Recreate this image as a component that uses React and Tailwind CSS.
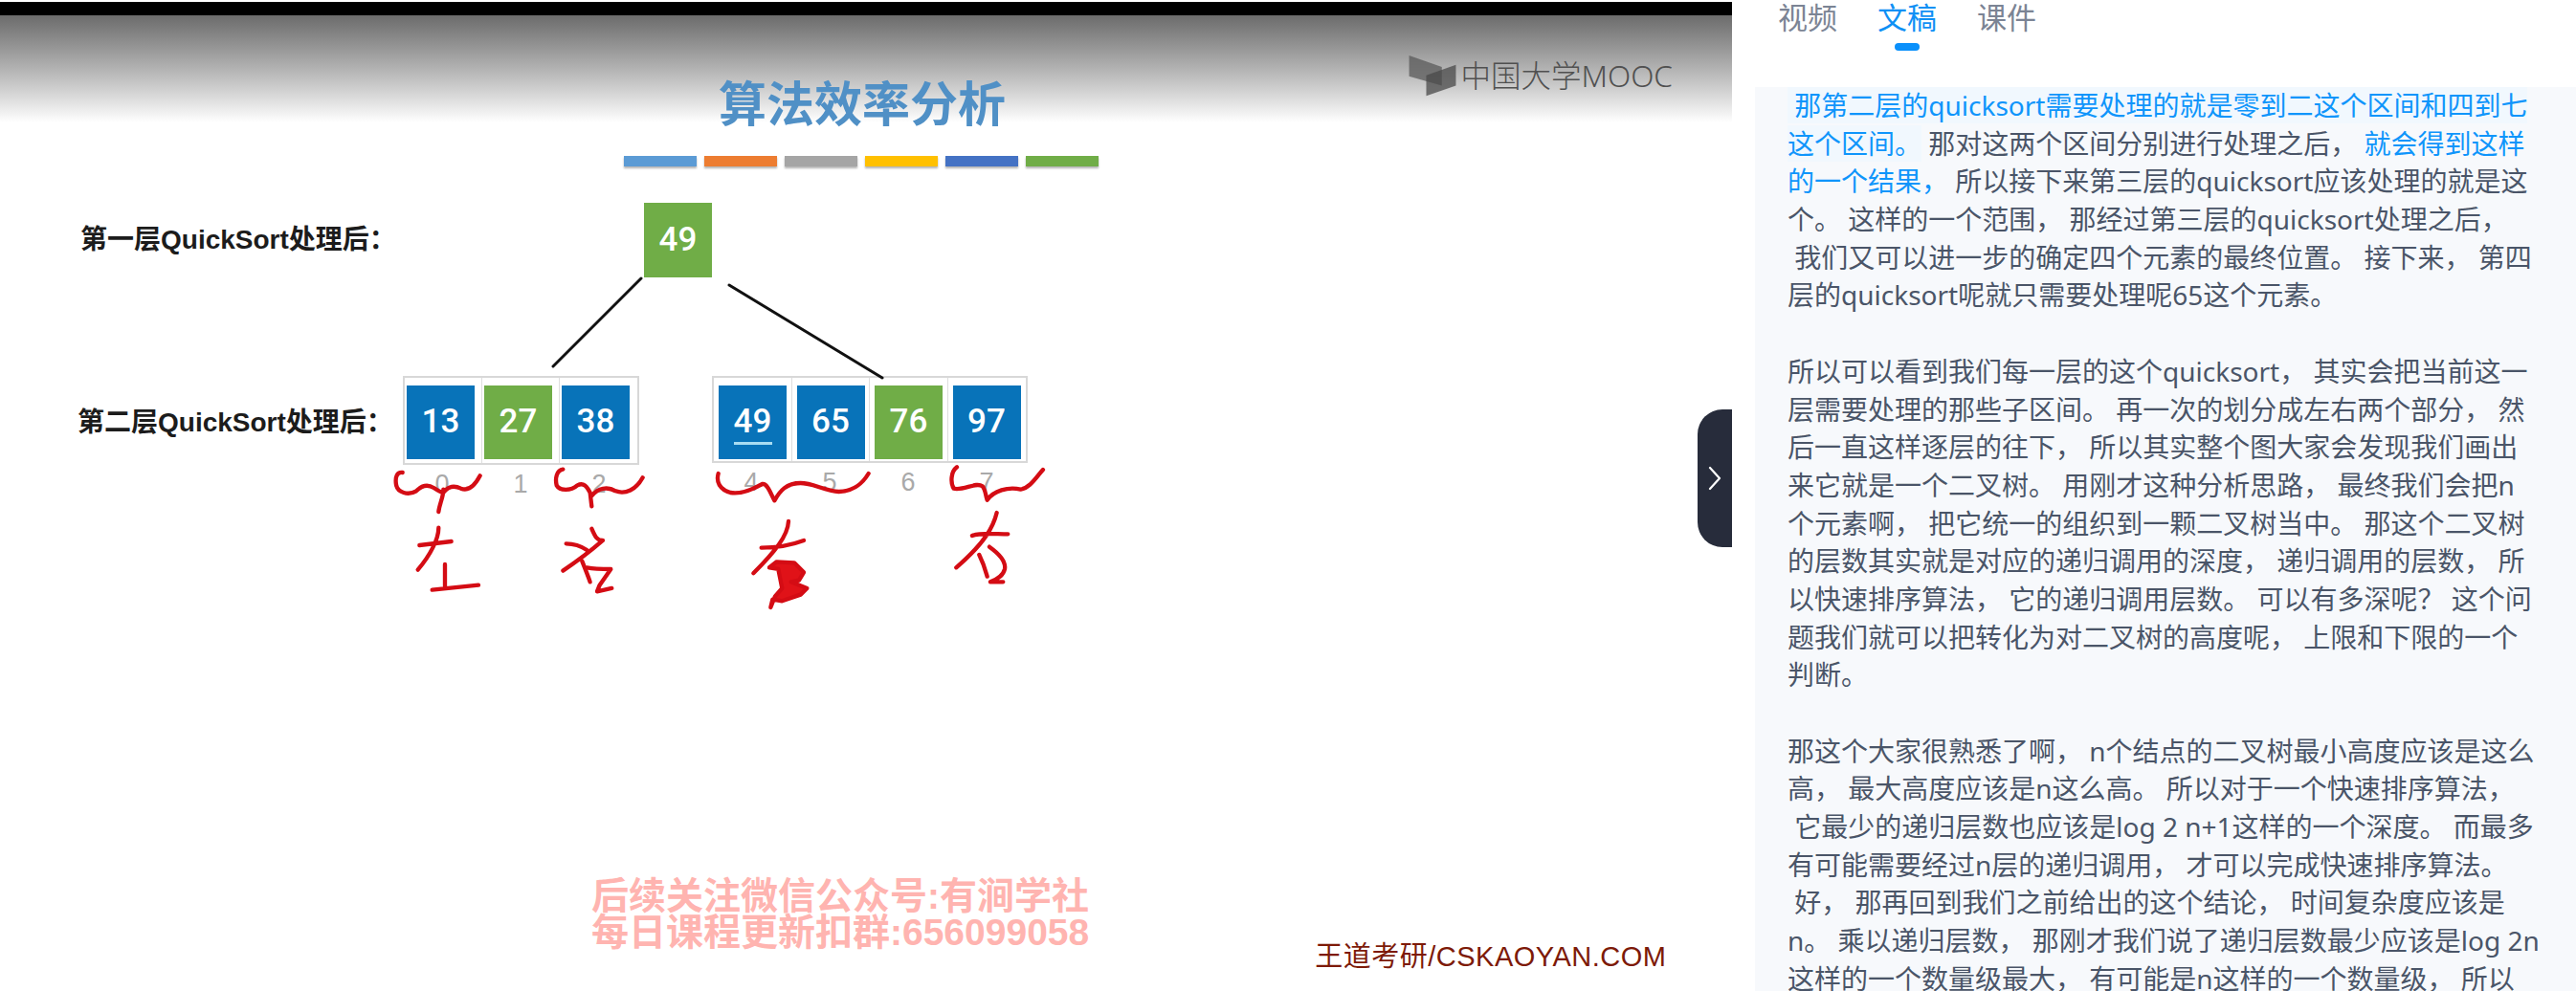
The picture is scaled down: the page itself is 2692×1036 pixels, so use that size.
const blueCells = "bg-[#0873b9]"
const greenCells = "bg-[#70ad47]"

const firstTable = [
  { n: 13, i: 0, c: blueCells },
  { n: 27, i: 1, c: greenCells },
  { n: 38, i: 2, c: blueCells },
]
const secondTable = [
  { n: 49, i: 4, c: blueCells, mark: true },
  { n: 65, i: 5, c: blueCells },
  { n: 76, i: 6, c: greenCells },
  { n: 97, i: 7, c: blueCells },
]
const bars = ["bg-[#5b9bd5]", "bg-[#ed7d31]", "bg-[#a5a5a5]", "bg-[#ffc000]", "bg-[#4472c4]", "bg-[#70ad47]"]

// b = blue text, h = blue text with the pale highlight
const lines = [
  [["h", " 那第二层的quicksort需要处理的就是零到二这个区间和四到七"]],
  [["h", "这个区间。"], ["", " 那对这两个区间分别进行处理之后， "], ["b", "就会得到这样"]],
  [["b", "的一个结果， "], ["", "所以接下来第三层的quicksort应该处理的就是这"]],
  [["", "个。 这样的一个范围， 那经过第三层的quicksort处理之后，"]],
  [["", " 我们又可以进一步的确定四个元素的最终位置。 接下来， 第四"]],
  [["", "层的quicksort呢就只需要处理呢65这个元素。"]],
  [],
  [["", "所以可以看到我们每一层的这个quicksort， 其实会把当前这一"]],
  [["", "层需要处理的那些子区间。 再一次的划分成左右两个部分， 然"]],
  [["", "后一直这样逐层的往下， 所以其实整个图大家会发现我们画出"]],
  [["", "来它就是一个二叉树。 用刚才这种分析思路， 最终我们会把n"]],
  [["", "个元素啊， 把它统一的组织到一颗二叉树当中。 那这个二叉树"]],
  [["", "的层数其实就是对应的递归调用的深度， 递归调用的层数， 所"]],
  [["", "以快速排序算法， 它的递归调用层数。 可以有多深呢？ 这个问"]],
  [["", "题我们就可以把转化为对二叉树的高度呢， 上限和下限的一个"]],
  [["", "判断。"]],
  [],
  [["", "那这个大家很熟悉了啊， n个结点的二叉树最小高度应该是这么"]],
  [["", "高， 最大高度应该是n这么高。 所以对于一个快速排序算法，"]],
  [["", " 它最少的递归层数也应该是log 2 n+1这样的一个深度。 而最多"]],
  [["", "有可能需要经过n层的递归调用， 才可以完成快速排序算法。"]],
  [["", " 好， 那再回到我们之前给出的这个结论， 时间复杂度应该是"]],
  [["", "n。 乘以递归层数， 那刚才我们说了递归层数最少应该是log 2n"]],
  [["", "这样的一个数量级最大， 有可能是n这样的一个数量级， 所以"]],
]

function Square({ n, c, mark }) {
  return (
    <div className={`relative w-[71px] h-[77px] flex items-center justify-center text-white text-[35px] font-medium font-['Roboto',sans-serif] ${c}`}>
      {n}
      {mark && <div className="absolute left-[16px] top-[59px] w-[40px] h-[3px] bg-[#a8dcf2]" />}
    </div>
  )
}

function ArrayTable({ cells, pad, height, cellWidth }) {
  return (
    <div className="flex flex-col">
      <div className={`flex border-2 border-[#d8d8d8] w-fit ${height}`}>
        {cells.map((cell) => (
          <div key={cell.i} className={`pt-[8px] border-r border-[#dedede] last:border-r-0 ${cellWidth} ${pad}`}>
            <Square n={cell.n} c={cell.c} mark={cell.mark} />
          </div>
        ))}
      </div>
      <div className="flex mt-[4px]">
        {cells.map((cell) => (
          <div key={cell.i} className="w-[82px] text-center text-[27px] leading-[32px] text-[#a9a9a9] font-['Liberation_Sans',sans-serif]">
            {cell.i}
          </div>
        ))}
      </div>
    </div>
  )
}

function Logo() {
  return (
    <div className="flex items-center text-[#505050]">
      <svg width="50" height="44" viewBox="30 25 150 135">
        <polygon points="30,28 135,65 135,125 30,95" fill="#5a5a5a" opacity="0.75" />
        <polygon points="85,92 180,58 180,125 85,158" fill="#4a4a4a" opacity="0.75" />
      </svg>
      <span className="ml-[5px] text-[31.5px] leading-[36px] font-light whitespace-nowrap">中国大学MOOC</span>
    </div>
  )
}

// tree edges and pen strokes sit on top of the slide; pen paths are 3x from their crop origin
function SlideMarks() {
  return (
    <svg className="absolute left-0 top-0 pointer-events-none" width="1810" height="1036" viewBox="0 0 1810 1036">
      <path d="M670 291L578 383M762 298L922 395" fill="none" stroke="#111" strokeWidth="3" strokeLinecap="round" />
      <g transform="translate(400 480) scale(0.3333)" fill="none" stroke="#d40c14" strokeWidth="13" strokeLinecap="round" strokeLinejoin="round">
        <path d="M62 42C45 40 38 55 42 80C46 105 80 115 105 100C120 85 140 78 160 90C175 100 185 105 190 105M190 95C190 120 178 140 175 165M190 105C205 85 225 82 245 92C265 100 285 90 305 52" />
        <path d="M565 32C545 35 540 60 545 82C555 100 590 100 610 82C630 72 640 85 650 105L655 148M655 115C675 90 705 85 730 100C760 112 795 95 815 58" />
        <path d="M115 270L215 258M175 215C175 250 150 300 110 347M195 330L195 400M155 410L300 395" />
        <path d="M575 265C600 265 625 275 640 285M655 218C665 240 670 255 690 255C650 290 610 320 565 350M625 320C635 345 645 370 650 385M640 340C665 345 690 345 715 345L680 395L672 415L718 405" />
      </g>
      <g transform="translate(730 480) scale(0.3333)" fill="none" stroke="#d40c14" strokeWidth="13" strokeLinecap="round" strokeLinejoin="round">
        <path d="M62 45C55 70 65 95 100 105C130 110 170 95 200 78C215 75 225 105 238 130C255 100 275 75 320 75C360 75 395 100 440 102C490 100 515 75 533 45" />
        <path d="M810 25C790 40 790 75 800 92C830 100 870 70 890 85C900 95 900 115 905 128C925 100 970 85 1010 95C1040 90 1060 55 1080 33" />
        <path d="M282 195C280 240 240 290 172 358M197 278C240 278 290 270 330 255" />
        <path fill="#e01218" d="M222 340L245 322L300 325L330 355L315 380L290 385L340 405L320 425L262 445L232 440L226 465L240 430L262 405L255 370L250 345Z" />
        <path d="M935 168C925 210 900 260 808 340M858 240C880 230 930 235 970 235M880 300C895 330 900 350 905 368M912 275C940 295 965 320 960 345C955 365 940 375 915 385L955 385" />
      </g>
    </svg>
  )
}

function Slide() {
  return (
    <main className="relative w-[1810px] shrink-0 pt-[2px] h-full flex flex-col">
      <div className="h-[14px] bg-black" />
      <div className="h-[112px] bg-gradient-to-b from-[#6c6c6c] to-white flex items-start">
        <h1 className="ml-[751px] mt-[62px] text-[50px] leading-[60px] font-bold text-[#5090c6] whitespace-nowrap">算法效率分析</h1>
        <div className="ml-auto mr-[62px] mt-[41px]">
          <Logo />
        </div>
      </div>
      <div className="flex ml-[652px] mt-[35px] gap-[8px]">
        {bars.map((c) => (
          <div key={c} className={`w-[76px] h-[11px] shadow-[0_2px_2px_rgba(0,0,0,0.3)] ${c}`} />
        ))}
      </div>
      <div className="flex items-center mt-[38px]">
        <div className="w-[673px] pl-[84px] text-[28px] font-bold text-[#1c1c1c] font-['Liberation_Sans','Noto_Sans_CJK_SC',sans-serif]">第一层QuickSort处理后：</div>
        <div className="w-[71px] h-[78px] bg-[#70ad47] flex items-center justify-center text-white text-[35px] font-medium font-['Roboto',sans-serif]">49</div>
      </div>
      <div className="flex mt-[103px] items-start">
        <div className="w-[421px] pl-[81px] mt-[28px] text-[28px] font-bold text-[#1c1c1c] whitespace-nowrap font-['Liberation_Sans','Noto_Sans_CJK_SC',sans-serif]">第二层QuickSort处理后：</div>
        <ArrayTable cells={firstTable} pad="pl-[2px]" height="h-[93px]" cellWidth="w-[81px]" />
        <div className="ml-[76px]">
          <ArrayTable cells={secondTable} pad="pl-[5px]" height="h-[91px]" cellWidth="w-[81.5px]" />
        </div>
      </div>
      <div className="flex items-start ml-[618px] mt-[396px] font-['Liberation_Sans','Noto_Sans_CJK_SC',sans-serif]">
        <div className="font-bold text-[#ffb4b0] text-[39px] leading-[38px] whitespace-nowrap">
          <div>后续关注微信公众号:有涧学社</div>
          <div>每日课程更新扣群:656099058</div>
        </div>
        <div className="ml-[236px] mt-[65px] text-[29px] leading-[34px] tracking-[0.5px] text-[#7d1a08] whitespace-nowrap">王道考研/CSKAOYAN.COM</div>
      </div>
      <SlideMarks />
      <button className="absolute right-0 top-[428px] w-[36px] h-[144px] bg-[#272c3b] rounded-l-[26px] flex items-center justify-center">
        <svg width="14" height="26" viewBox="0 0 14 26" fill="none" stroke="white" strokeWidth="2.2" strokeLinecap="round" strokeLinejoin="round">
          <path d="M2 2L12 13L2 24" />
        </svg>
      </button>
    </main>
  )
}

function Transcript() {
  return (
    <aside className="flex-1 min-w-0 flex flex-col">
      <div className="h-[91px] pl-[48px] flex gap-[42px] text-[31px] leading-[36px] text-[#7b8494]">
        <span className="h-fit">视频</span>
        <div className="flex flex-col items-center">
          <span className="text-[#0f90f5]">文稿</span>
          <div className="mt-[9px] w-[26px] h-[8px] rounded-full bg-[#0a90fb]" />
        </div>
        <span className="h-fit">课件</span>
      </div>
      <div className="ml-[24px] flex-1 bg-[#f7f9fc] pl-[34px] overflow-hidden text-[28px] text-[#4a5568]">
        {lines.map((segs, k) => (
          <div key={k} className="h-[39.7px] leading-[39.7px] whitespace-pre">
            {segs.map(([kind, text], j) => (
              <span
                key={j}
                className={kind === "h" ? "text-[#0f95fb] bg-[#f1f8fe]" : kind === "b" ? "text-[#0f95fb]" : ""}
              >
                {text}
              </span>
            ))}
          </div>
        ))}
      </div>
    </aside>
  )
}

export default function App() {
  return (
    <div className="flex w-[2692px] h-[1036px] overflow-hidden bg-white font-['Noto_Sans','Noto_Sans_CJK_SC',sans-serif]">
      <Slide />
      <Transcript />
    </div>
  )
}
